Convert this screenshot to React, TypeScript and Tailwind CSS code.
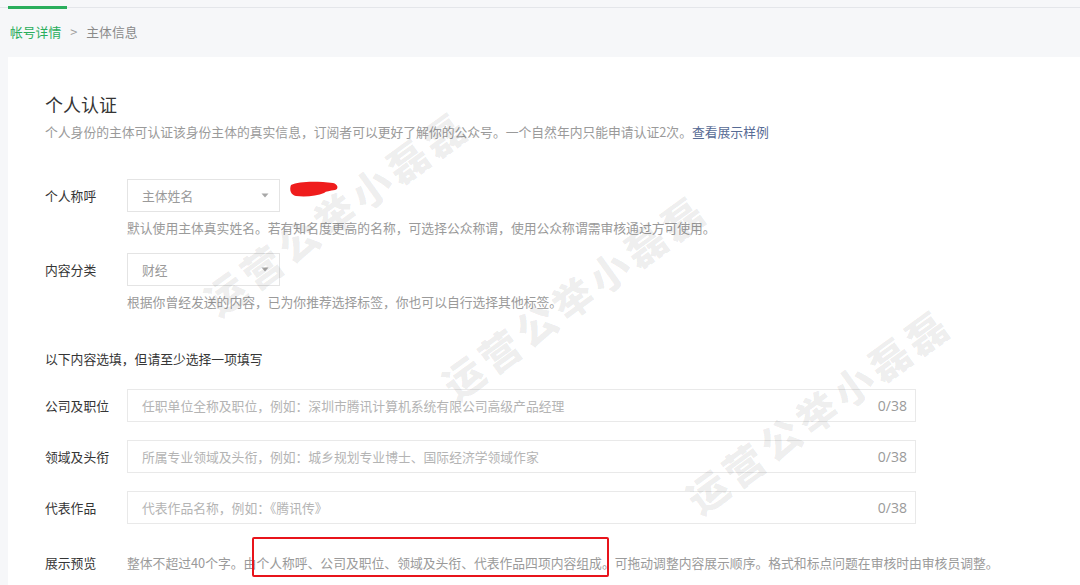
const font = { fontFamily: '"Noto Sans CJK SC", "Noto Sans", sans-serif' }

function Select({ value }: { value: string }) {
  return (
    <div className="flex h-[33px] w-[153px] items-center justify-between border border-[#e4e4e4] bg-white pl-[14px] pr-[10px]">
      <span className="text-[12.8px] text-[#9a9a9a]">{value}</span>
      <svg width="8" height="5" viewBox="0 0 8 5">
        <path d="M0.5 0.5 L7.5 0.5 L4 4.5 Z" fill="#a8a8a8" />
      </svg>
    </div>
  )
}

function TextField({ label, placeholder }: { label: string; placeholder: string }) {
  return (
    <div className="flex items-center">
      <div className="w-[82px] text-[12.8px] text-[#353535]">{label}</div>
      <div className="flex h-[33px] w-[789px] items-center justify-between border border-[#e9e9e9] bg-white pl-[14px] pr-[8px]">
        <span className="text-[12.8px] text-[#b4b4b4]">{placeholder}</span>
        <span className="text-[14px] text-[#9a9a9a]" style={{ fontFamily: '"Open Sans", "Noto Sans", sans-serif' }}>
          0/38
        </span>
      </div>
    </div>
  )
}

function Watermark({ x, y }: { x: number; y: number }) {
  return (
    <div
      className="pointer-events-none absolute -translate-x-1/2 -translate-y-1/2 -rotate-[36deg] whitespace-nowrap text-[40px] font-black tracking-[5px] text-black/[0.075]"
      style={{ left: x, top: y }}
    >
      运营公举小磊磊
    </div>
  )
}

export default function App() {
  return (
    <div className="relative h-[585px] w-[1080px] overflow-hidden bg-[#f6f7f9]" style={font}>
      {/* Tab line */}
      <div className="pt-[7px]">
        <div className="relative h-px bg-[#e4e6ea]">
          <div className="absolute left-[8px] top-[-1px] h-[3px] w-[59px] bg-[#2aae5c]" />
        </div>
      </div>

      {/* Breadcrumb */}
      <div className="flex h-[49px] items-center gap-[9px] pl-[10px] pb-[2px] text-[12.8px]">
        <span className="text-[#2aae5c]">帐号详情</span>
        <span className="text-[#9a9a9a]">&gt;</span>
        <span className="text-[#8a8a8a]">主体信息</span>
      </div>

      {/* Card */}
      <div className="relative ml-[8px] h-[560px] bg-white pl-[37px] pt-[35px]">
        <h1 className="text-[18px] leading-[24px] text-[#353535]">个人认证</h1>
        <p className="mt-[6px] text-[12.8px] leading-[20px] text-[#9a9a9a]">
          个人身份的主体可认证该身份主体的真实信息，订阅者可以更好了解你的公众号。一个自然年内只能申请认证2次。
          <span className="text-[#576b95]">查看展示样例</span>
        </p>

        <div className="mt-[37px] flex items-center">
          <div className="w-[82px] text-[12.8px] text-[#353535]">个人称呼</div>
          <Select value="主体姓名" />
        </div>
        <p className="mt-[6px] pl-[82px] text-[12.8px] leading-[20px] text-[#9a9a9a]">
          默认使用主体真实姓名。若有知名度更高的名称，可选择公众称谓，使用公众称谓需审核通过方可使用。
        </p>

        <div className="mt-[15px] flex items-center">
          <div className="w-[82px] text-[12.8px] text-[#353535]">内容分类</div>
          <Select value="财经" />
        </div>
        <p className="mt-[6px] pl-[82px] text-[12.8px] leading-[20px] text-[#9a9a9a]">
          根据你曾经发送的内容，已为你推荐选择标签，你也可以自行选择其他标签。
        </p>

        <p className="mt-[37px] text-[12.8px] leading-[20px] text-[#353535]">以下内容选填，但请至少选择一项填写</p>

        <div className="mt-[20px] flex flex-col gap-[18px]">
          <TextField label="公司及职位" placeholder="任职单位全称及职位，例如：深圳市腾讯计算机系统有限公司高级产品经理" />
          <TextField label="领域及头衔" placeholder="所属专业领域及头衔，例如：城乡规划专业博士、国际经济学领域作家" />
          <TextField label="代表作品" placeholder="代表作品名称，例如：《腾讯传》" />
        </div>

        <div className="mt-[29px] flex items-center text-[12.8px] leading-[20px]">
          <div className="w-[82px] text-[#353535]">展示预览</div>
          <span className="text-[#9a9a9a]">
            整体不超过40个字。由个人称呼、公司及职位、领域及头衔、代表作品四项内容组成。可拖动调整内容展示顺序。格式和标点问题在审核时由审核员调整。
          </span>
        </div>

        {/* Red redaction scribble over the name */}
        <svg className="absolute left-[281px] top-[123px] h-[18px] w-[50px]" viewBox="0 0 50 18">
          <path
            d="M2 5 C10 1 28 1 44 3 C49 4 50 9 46 10 C41 11 37 11 35 13 C28 16 17 17 7 16 C2 15 0 10 2 5 Z"
            fill="#ef1c1c"
          />
        </svg>

        {/* Red highlight box */}
        <div className="pointer-events-none absolute left-[244px] top-[480px] h-[40px] w-[357px] rounded-[2px] border-2 border-[#e8141b]" />
      </div>

      <Watermark x={336} y={212} />
      <Watermark x={574} y={296} />
      <Watermark x={818} y={410} />
    </div>
  )
}
